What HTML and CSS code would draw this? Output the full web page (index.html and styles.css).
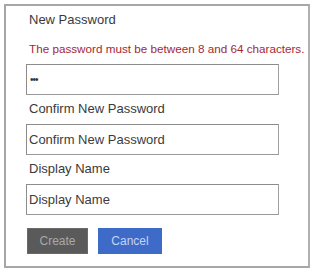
FILE: index.html
```html
<!DOCTYPE html>
<html>
<head>
<meta charset="utf-8">
<link rel="stylesheet" href="styles.css">
</head>
<body>
<div class="panel">
  <div class="label first">New Password</div>
  <div class="error">The password must be between 8 and 64 characters.</div>
  <div class="field f1"><span class="dots">•••</span></div>
  <div class="label">Confirm New Password</div>
  <div class="field"><span class="ph">Confirm New Password</span></div>
  <div class="label">Display Name</div>
  <div class="field"><span class="ph">Display Name</span></div>
  <div class="actions">
    <button class="btn create">Create</button>
    <button class="btn cancel">Cancel</button>
  </div>
</div>
</body>
</html>
```
FILE: styles.css
```css
html, body {
  margin: 0;
  padding: 0;
  background: #fff;
}
body {
  font-family: "Liberation Sans", Arial, sans-serif;
  color: #333;
}
.panel {
  margin: 4px 0 0 4px;
  width: 306px;
  height: 264px;
  border: 2px solid #a6a6a6;
  border-right-color: #b0b0b0;
  padding: 0 0 0 20px;
  box-sizing: border-box;
}
.label {
  font-size: 13px;
  line-height: 15px;
  height: 15px;
  margin: 6px 0 0 3px;
  color: #3a3a3a;
}
.label.first {
  margin-top: 6px;
}
.error {
  font-size: 11.7px;
  line-height: 14px;
  margin: 15px 0 0 3px;
  color: #a52834;
  white-space: nowrap;
}
.field {
  width: 253px;
  height: 31px;
  box-sizing: border-box;
  border: 1px solid #8c8c8c;
  border-right-color: #a0a0a0;
  border-bottom-color: #9a9a9a;
  margin-top: 8px;
  padding-left: 2px;
  display: flex;
  align-items: center;
  font-size: 13px;
}
.field.f1 {
  margin-top: 8px;
}
.dots {
  font-size: 10px;
  letter-spacing: -1px;
  color: #333;
  padding-left: 1px;
}
.ph {
  color: #3c3c3c;
}
.actions {
  display: flex;
  gap: 10px;
  margin: 13px 0 0 1px;
}
.btn {
  height: 26px;
  border: none;
  padding: 0;
  font-family: "Liberation Sans", Arial, sans-serif;
  font-size: 12px;
}
.create {
  width: 61px;
  background: #5a5a5a;
  color: #a9a9a9;
  border: 1px solid #6a6a6a;
}
.cancel {
  width: 64px;
  background: #3e6bc7;
  color: #c6d3f2;
}
```
